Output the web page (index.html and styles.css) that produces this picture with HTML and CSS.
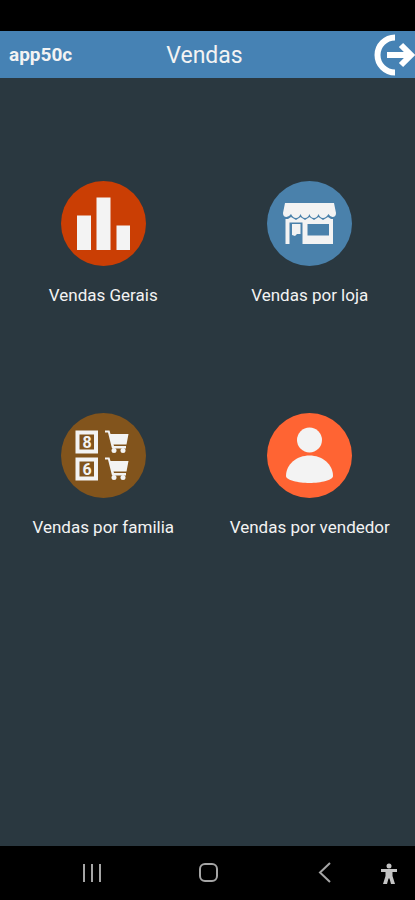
FILE: index.html
```html
<!DOCTYPE html>
<html lang="pt">

<head>
    <meta charset="UTF-8">
    <meta name="viewport" content="width=device-width, initial-scale=1.0">
    <title>Vendas</title>
    <link rel="stylesheet" href="styles.css">
</head>

<body>

    <header class="topbar">
        <span class="user">app50c</span>
        <h1>Vendas</h1>
        <button class="logout" type="button" aria-label="Sair">
            <svg width="42" height="42" viewBox="0 0 42 42" fill="none" stroke="#fff">
                <path d="M22 3.5A17.5 17.5 0 0 0 22 38.5" stroke-width="6"/>
                <path d="M14 21H38" stroke-width="6"/>
                <path d="M28 11L38 21L28 31" stroke-width="6"/>
            </svg>
        </button>
    </header>

    <main class="menu">
        <a class="item" href="#gerais">
            <svg class="icon" viewBox="0 0 85 85" fill="#f3f3f3">
                <circle cx="42.5" cy="42.5" r="42.5" fill="#ca3e04"/>
                <path d="M16 34.5H30V69H16ZM35.5 16.5H49.5V69H35.5ZM55.5 44.5H69V69H55.5Z"/>
            </svg>
            <span>Vendas Gerais</span>
        </a>

        <a class="item" href="#loja">
            <svg class="icon" viewBox="0 0 85 85" fill="#f3f3f3">
                <circle cx="42.5" cy="42.5" r="42.5" fill="#4a81ab"/>
                <path d="M18 22H67L69 32Q69 36 65.5 36Q63 36 61.5 33Q59 37 56 37Q53 37 51.5 33Q50 37 47 37Q43.5 37 42.5 33Q41 37 38 37Q35 37 33.5 33Q32 37 29 37Q26 37 24 33Q22 36 19.5 36Q16 36 16 32Z"/>
                <path d="M18.5 38H21L24 36L29 39L33.5 36L38 39L42.5 36L47 39L51.5 36L56 39L61 36L64 38H66V63H35.5V41.5H22.5V63H18.5Z"/>
                <path d="M25 43H33.5V53H30L28 55L25 54Z"/>
                <path d="M40.5 43H62V54.5H40.5Z" fill="#4a81ab"/>
            </svg>
            <span>Vendas por loja</span>
        </a>

        <a class="item" href="#familia">
            <svg class="icon" viewBox="0 0 85 85" fill="#f3f3f3">
                <circle cx="42.5" cy="42.5" r="42.5" fill="#82541c"/>
                <g id="linha">
                    <path d="M14.5 17.5H37V40.5H14.5ZM18.5 21.5V36.5H33V21.5Z" fill-rule="evenodd"/>
                    <path d="M44 17.5H48.5L49.5 21H67.5L65.5 31.5H52.5L53 33H65V35.5H51L47 19.5H44Z"/>
                    <circle cx="53" cy="37.5" r="2.5"/>
                    <circle cx="62" cy="37.5" r="2.5"/>
                </g>
                <use href="#linha" y="27"/>
                <text class="digit" x="26" y="35">8</text>
                <text class="digit" x="26" y="62">6</text>
            </svg>
            <span>Vendas por familia</span>
        </a>

        <a class="item" href="#vendedor">
            <svg class="icon" viewBox="0 0 85 85" fill="#f3f3f3">
                <circle cx="42.5" cy="42.5" r="42.5" fill="#ff6433"/>
                <circle cx="42.5" cy="27" r="12.5"/>
                <path d="M19 63C19 51 30 42.5 42.5 42.5S66 51 66 63C66 67 54 70 42.5 70S19 67 19 63Z"/>
            </svg>
            <span>Vendas por vendedor</span>
        </a>
    </main>

    <nav class="navbar">
        <div class="keys">
            <button type="button" aria-label="Recentes">
                <svg width="28" height="28" viewBox="0 0 28 28" fill="none" stroke="#a5a5a5" stroke-width="2">
                    <path d="M6 5V23M14 5V23M22 5V23"/>
                </svg>
            </button>
            <button type="button" aria-label="Início">
                <svg width="28" height="28" viewBox="0 0 28 28" fill="none" stroke="#a5a5a5" stroke-width="2">
                    <rect x="5" y="5" width="17" height="17" rx="5"/>
                </svg>
            </button>
            <button type="button" aria-label="Voltar">
                <svg width="28" height="28" viewBox="0 0 28 28" fill="none" stroke="#a5a5a5" stroke-width="2">
                    <path d="M19 4L9 13.5L19 23"/>
                </svg>
            </button>
        </div>
        <button type="button" aria-label="Acessibilidade">
            <svg width="28" height="28" viewBox="0 0 28 28" fill="#c4c4c4">
                <circle cx="14" cy="7" r="2.5"/>
                <path d="M6 10H22V13H17.500V17L20 25H16L14.5 19.5H13.5L12 25H8L10.500 17V13H6Z"/>
            </svg>
        </button>
    </nav>

</body>

</html>
```
FILE: styles.css
```css
body {
    margin: 0;
    min-height: 100vh;
    display: flex;
    flex-direction: column;
    box-sizing: border-box;
    padding-top: 31px;
    font-family: Roboto, sans-serif;
    color: #f3f3f3;
    background: #000;
}

button {
    display: flex;
    padding: 0;
    border: none;
    background: none;
    cursor: pointer;
}

.topbar {
    display: grid;
    grid-template-columns: 1fr auto 1fr;
    align-items: center;
    height: 47px;
    background: #4682b4;
}

.user {
    padding-left: 9px;
    font-size: 19px;
    font-weight: bold;
}

h1 {
    margin: 0;
    padding: 2px 6px 0 0;
    font-size: 23px;
    font-weight: normal;
}

.logout {
    justify-self: end;
}

.menu {
    flex: 1;
    display: grid;
    grid-template-columns: 1fr 1fr;
    align-content: start;
    row-gap: 108px;
    padding: 103px 2px 0 0;
    background: #2a3840;
}

.item {
    display: flex;
    flex-direction: column;
    align-items: center;
    gap: 19px;
    font-size: 17px;
    line-height: 20px;
    white-space: nowrap;
    color: inherit;
    text-decoration: none;
}

.icon {
    width: 85px;
    height: 85px;
}

.digit {
    font-size: 16px;
    font-weight: bold;
    text-anchor: middle;
}

.navbar {
    display: flex;
    align-items: center;
    gap: 36px;
    height: 54px;
    padding: 0 12px 0 78px;
}

.keys {
    flex: 1;
    display: flex;
    justify-content: space-between;
}
```
